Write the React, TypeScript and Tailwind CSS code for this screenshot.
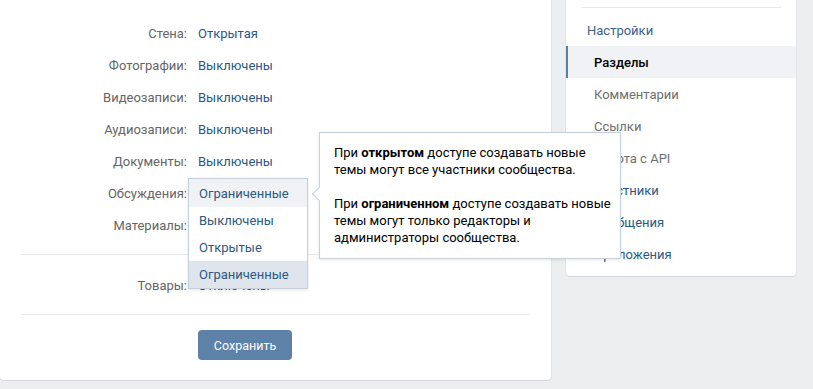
import React from "react";

const rows = [
  { label: "Стена:", value: "Открытая" },
  { label: "Фотографии:", value: "Выключены" },
  { label: "Видеозаписи:", value: "Выключены" },
  { label: "Аудиозаписи:", value: "Выключены" },
  { label: "Документы:", value: "Выключены" },
  { label: "Обсуждения:", value: "" },
  { label: "Материалы:", value: "" },
];

const options = [
  { text: "Ограниченные", cls: "h-[28px] bg-[#f0f2f5]" },
  { text: "Выключены", cls: "h-[27px] bg-white" },
  { text: "Открытые", cls: "h-[27px] bg-white" },
  { text: "Ограниченные", cls: "h-[27px] bg-[#dfe5ec]" },
];

const menu = [
  { text: "Комментарии", cls: "text-[#6d6f73]" },
  { text: "Ссылки", cls: "text-[#6d6f73]" },
  { text: "Работа с API", cls: "text-[#6d6f73]" },
  { text: "Участники", cls: "text-[#2a5885]" },
  { text: "Сообщения", cls: "text-[#2a5885]" },
  { text: "Приложения", cls: "text-[#2a5885]" },
];

function Row({ label, value }: { label: string; value: string }) {
  return (
    <div className="flex h-[32px] items-center">
      <div className="w-[187px] text-right text-[#656565]">{label}</div>
      <div className="pl-[11px] text-[#2a5885]">{value}</div>
    </div>
  );
}

export default function App() {
  return (
    <div
      className="relative flex h-[389px] w-full gap-[15px] overflow-hidden bg-[#edeef0] text-[13px] leading-[17px]"
      style={{ fontFamily: "Roboto, 'Open Sans', Arial, sans-serif" }}
    >
      {/* main panel */}
      <div className="relative h-[380px] w-[551px] shrink-0 rounded-b-[4px] bg-white shadow-[0_1px_0_0_#d7d8db,0_0_0_1px_#e3e4e8]">
        <div className="pt-[17px]">
          {rows.map((r) => (
            <Row key={r.label} label={r.label} value={r.value} />
          ))}
        </div>
        <div className="mx-[21px] mt-[13px] h-px bg-[#e7e8ec]" />
        <div className="mt-[14px]">
          <Row label="Товары:" value="Отключены" />
        </div>
        <div className="mx-[21px] mt-[13px] h-px bg-[#e7e8ec]" />
        <div className="mt-[15px] pl-[198px]">
          <button className="h-[30px] w-[94px] rounded-[4px] bg-[#5e81a8] text-[12.5px] text-white">
            Сохранить
          </button>
        </div>

        {/* dropdown */}
        <div className="absolute left-[188px] top-[178px] w-[120px] border border-[#c5d0db] bg-white shadow-[0_1px_3px_rgba(0,0,0,0.1)]">
          {options.map((o, i) => (
            <div key={i} className={`flex items-center pl-[10px] text-[#2a5885] ${o.cls}`}>
              {o.text}
            </div>
          ))}
        </div>
      </div>

      {/* right menu */}
      <div className="h-[276px] w-[230px] shrink-0 rounded-b-[4px] bg-white shadow-[0_1px_0_0_#d7d8db,0_0_0_1px_#e3e4e8]">
        <div className="mx-[15px] mt-[7px] h-px bg-[#e7e8ec]" />
        <div className="flex h-[38px] items-center pl-[21px] pt-[6px] text-[#3d6190]">Настройки</div>
        <div className="flex h-[32px] items-center border-l-2 border-[#5b7fa6] bg-[#f0f2f5] pl-[26px] font-medium text-black">
          Разделы
        </div>
        {menu.map((m) => (
          <div key={m.text} className={`flex h-[32px] items-center pl-[28px] ${m.cls}`}>
            {m.text}
          </div>
        ))}
      </div>

      {/* tooltip */}
      <div className="absolute left-[319px] top-[132px] w-[302px] whitespace-nowrap border border-[#c5d0db] bg-white pb-[12px] pl-[14px] pr-[8px] pt-[11px] text-black shadow-[0_1px_3px_rgba(0,0,0,0.1)]">
        <div className="absolute left-[-6px] top-[56px] h-[10px] w-[10px] rotate-45 border-b border-l border-[#c5d0db] bg-white" />
        <p>
          При <b>открытом</b> доступе создавать новые
          <br />
          темы могут все участники сообщества.
        </p>
        <p className="mt-[17px]">
          При <b>ограниченном</b> доступе создавать новые
          <br />
          темы могут только редакторы и
          <br />
          администраторы сообщества.
        </p>
      </div>
    </div>
  );
}
